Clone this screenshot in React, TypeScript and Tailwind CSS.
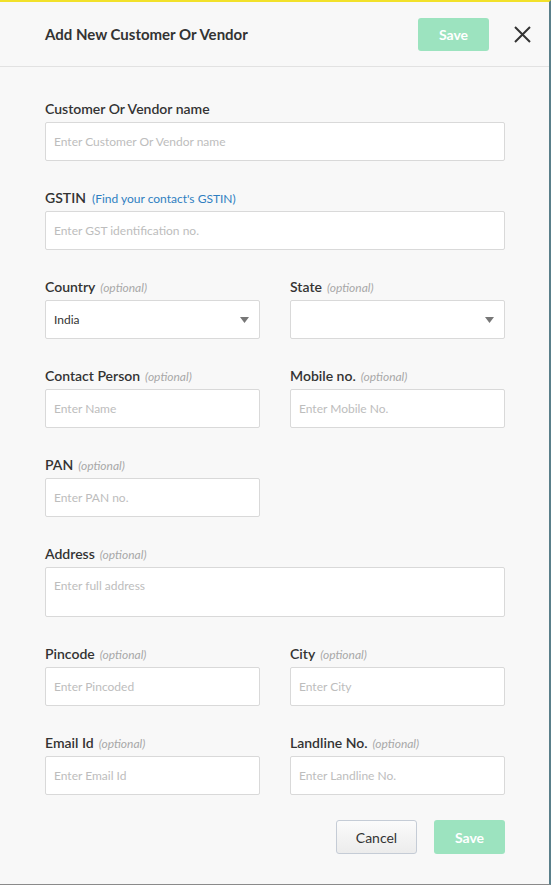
import React from "react";

const font = { fontFamily: "Lato, 'Open Sans', sans-serif" };

function Label({ text, optional, link }: { text: string; optional?: boolean; link?: string }) {
  return (
    <div className="flex items-baseline h-[20px] mb-[3px] leading-[20px]">
      <span className="text-[14px] font-semibold text-[#333]">{text}</span>
      {optional && <span className="ml-[5px] text-[12px] italic text-[#a8a8a8]">(optional)</span>}
      {link && <span className="ml-[6px] text-[12px] text-[#2f7fc1]">{link}</span>}
    </div>
  );
}

function Input({ placeholder, value }: { placeholder?: string; value?: string }) {
  return (
    <div className="h-[39px] bg-white border border-[#d9d9d9] rounded-[2px] px-[8px] flex items-center text-[12px]">
      {value ? <span className="text-[#333]">{value}</span> : <span className="text-[#bdbdbd]">{placeholder}</span>}
    </div>
  );
}

function Select({ value }: { value?: string }) {
  return (
    <div className="h-[39px] bg-white border border-[#d9d9d9] rounded-[2px] pl-[8px] pr-[10px] flex items-center justify-between text-[12px]">
      <span className="text-[#333]">{value ?? ""}</span>
      <svg width="9" height="6" viewBox="0 0 9 6"><path d="M0 0H9L4.5 6Z" fill="#777" /></svg>
    </div>
  );
}

export default function App() {
  return (
    <div style={font} className="w-[551px] h-[885px] bg-[#f8f8f8] border-t-[2px] border-t-[#f2e12a] border-r-[2px] border-r-[#5a7f8a] border-b border-b-[#8a8a8a] flex flex-col overflow-hidden">
      <div className="h-[65px] border-b border-[#e2e2e2] flex items-center pl-[45px] pr-[16px]">
        <div className="flex-1 text-[15px] font-bold text-[#333]">Add New Customer Or Vendor</div>
        <button className="w-[71px] h-[33px] rounded-[3px] bg-[#9ce3bf] text-white text-[14px] font-bold">Save</button>
        <button className="ml-[22px] w-[22px] h-[22px] flex items-center justify-center">
          <svg width="17" height="17" viewBox="0 0 17 17"><path d="M1 1L16 16M16 1L1 16" stroke="#333" strokeWidth="2" /></svg>
        </button>
      </div>
      <div className="pl-[45px] pr-[44px] pt-[32px] flex flex-col gap-[27px]">
        <div>
          <Label text="Customer Or Vendor name" />
          <Input placeholder="Enter Customer Or Vendor name" />
        </div>
        <div>
          <Label text="GSTIN" link="(Find your contact's GSTIN)" />
          <Input placeholder="Enter GST identification no." />
        </div>
        <div className="grid grid-cols-2 gap-x-[30px]">
          <div>
            <Label text="Country" optional />
            <Select value="India" />
          </div>
          <div>
            <Label text="State" optional />
            <Select />
          </div>
        </div>
        <div className="grid grid-cols-2 gap-x-[30px]">
          <div>
            <Label text="Contact Person" optional />
            <Input placeholder="Enter Name" />
          </div>
          <div>
            <Label text="Mobile no." optional />
            <Input placeholder="Enter Mobile No." />
          </div>
        </div>
        <div className="grid grid-cols-2 gap-x-[30px]">
          <div>
            <Label text="PAN" optional />
            <Input placeholder="Enter PAN no." />
          </div>
        </div>
        <div>
          <Label text="Address" optional />
          <div className="h-[50px] bg-white border border-[#d9d9d9] rounded-[2px] px-[8px] pt-[9px] text-[12px] text-[#bdbdbd]">Enter full address</div>
        </div>
        <div className="grid grid-cols-2 gap-x-[30px]">
          <div>
            <Label text="Pincode" optional />
            <Input placeholder="Enter Pincoded" />
          </div>
          <div>
            <Label text="City" optional />
            <Input placeholder="Enter City" />
          </div>
        </div>
        <div className="grid grid-cols-2 gap-x-[30px]">
          <div>
            <Label text="Email Id" optional />
            <Input placeholder="Enter Email Id" />
          </div>
          <div>
            <Label text="Landline No." optional />
            <Input placeholder="Enter Landline No." />
          </div>
        </div>
        <div className="flex justify-end gap-[17px] -mt-[2px]">
          <button className="w-[81px] h-[34px] rounded-[3px] border border-[#c5ccd6] bg-gradient-to-b from-[#fbfbfb] to-[#ececec] text-[14px] text-[#333]">Cancel</button>
          <button className="w-[71px] h-[34px] rounded-[3px] bg-[#9ce3bf] text-white text-[14px] font-bold">Save</button>
        </div>
      </div>
    </div>
  );
}
